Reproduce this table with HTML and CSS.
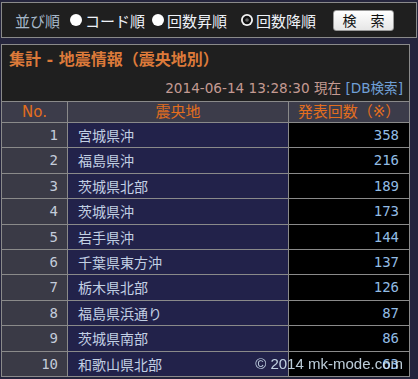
FILE: index.html
```html
<!DOCTYPE html>
<html lang="ja">
<head>
<meta charset="utf-8">
<title>集計 - 地震情報（震央地別）</title>
<link rel="stylesheet" href="styles.css">
</head>
<body>
<form class="sortbar">
  <span class="sort-label">並び順</span>
  <label class="opt opt-code"><svg class="radio" viewBox="0 0 12 12" width="12" height="12"><circle cx="6" cy="6" r="6" fill="#fff"/></svg>コード順</label>
  <label class="opt opt-asc"><svg class="radio" viewBox="0 0 12 12" width="12" height="12"><circle cx="6" cy="6" r="6" fill="#fff"/></svg>回数昇順</label>
  <label class="opt opt-desc"><svg class="radio" viewBox="0 0 12 12" width="12" height="12"><circle cx="6" cy="6" r="6" fill="#f4f4f4"/><circle cx="6" cy="6" r="4.2" fill="#111"/><circle cx="6" cy="6" r="1.8" fill="#666"/></svg>回数降順</label>
  <button type="button" class="search-btn">検　索</button>
</form>

<section class="panel">
  <h1 class="title">集計 - 地震情報（震央地別）</h1>
  <p class="stamp">2014-06-14 13:28:30 現在 <span class="db">[DB検索]</span></p>
  <table class="stats">
    <colgroup><col class="c-no"><col class="c-area"><col class="c-count"></colgroup>
    <thead>
      <tr><th>No.</th><th>震央地</th><th>発表回数（※）</th></tr>
    </thead>
    <tbody>
      <tr><td class="no">1</td><td class="area">宮城県沖</td><td class="count">358</td></tr>
      <tr><td class="no">2</td><td class="area">福島県沖</td><td class="count">216</td></tr>
      <tr><td class="no">3</td><td class="area">茨城県北部</td><td class="count">189</td></tr>
      <tr><td class="no">4</td><td class="area">茨城県沖</td><td class="count">173</td></tr>
      <tr><td class="no">5</td><td class="area">岩手県沖</td><td class="count">144</td></tr>
      <tr><td class="no">6</td><td class="area">千葉県東方沖</td><td class="count">137</td></tr>
      <tr><td class="no">7</td><td class="area">栃木県北部</td><td class="count">126</td></tr>
      <tr><td class="no">8</td><td class="area">福島県浜通り</td><td class="count">87</td></tr>
      <tr><td class="no">9</td><td class="area">茨城県南部</td><td class="count">86</td></tr>
      <tr><td class="no">10</td><td class="area">和歌山県北部</td><td class="count">63</td></tr>
    </tbody>
  </table>
</section>

<footer class="copyright">© 2014 mk-mode.com</footer>
</body>
</html>
```
FILE: styles.css
```css
html, body {
  margin: 0;
  padding: 0;
}
body {
  background: #25253d;
  padding: 2px 1px 0 1px;
  font-family: "DejaVu Sans", "Noto Sans CJK JP", sans-serif;
  font-size: 14px;
  color: #d0d8e4;
  overflow: hidden;
}

/* ---- sort bar ---- */
.sortbar {
  box-sizing: border-box;
  width: 416px;
  height: 36px;
  margin: 0;
  border: 1px solid #8a8a8a;
  background: #1f1f1f;
  display: flex;
  align-items: center;
  padding: 0 0 0 13px;
  font-family: "Noto Sans CJK JP", sans-serif;
  font-size: 15px;
}
.sort-label {
  color: #a6b8ca;
  margin-right: 10px;
}
.opt {
  display: flex;
  align-items: center;
  color: #eef2f8;
}
.radio {
  margin-right: 3px;
  flex: none;
}
.opt-code { width: 82px; }
.opt-asc { width: 89px; }
.opt-desc { width: 92px; }
.search-btn {
  box-sizing: border-box;
  width: 61px;
  height: 21px;
  padding: 0;
  border: 1px solid #9a9a9a;
  border-radius: 3px;
  background: linear-gradient(#ffffff, #e6e6e6);
  font-family: "Noto Sans CJK JP", sans-serif;
  font-size: 14px;
  line-height: 19px;
  color: #111;
}

/* ---- panel ---- */
.panel {
  box-sizing: border-box;
  width: 409px;
  margin-top: 6px;
  border: 1px solid #8a8a8a;
  border-bottom: none;
  background: #1f1f1f;
}
.title {
  margin: 0;
  padding: 5px 7px 0;
  font-size: 16px;
  line-height: 20px;
  font-weight: bold;
  color: #dc7a3a;
}
.stamp {
  margin: 9px 0 0;
  padding: 0 6px 4px 0;
  text-align: right;
  font-size: 13.6px;
  line-height: 18px;
  color: #c49a92;
}
.db {
  color: #6f9fd6;
}

/* ---- table ---- */
.stats {
  width: 100%;
  table-layout: fixed;
  border-collapse: separate;
  border-spacing: 0;
  border-top: 1px solid #8a8a8a;
}
.c-no { width: 66px; }
.c-area { width: 221px; }
.stats th,
.stats td {
  box-sizing: border-box;
  border-right: 1px solid #8a8a8a;
  border-bottom: 1px solid #8a8a8a;
  padding: 0;
}
.stats th:last-child,
.stats td:last-child {
  border-right: none;
}
.stats th {
  background: #3c3c4a;
  color: #e36e1e;
  font-weight: normal;
  font-size: 15px;
  line-height: 20px;
  text-align: center;
}
.stats td {
  line-height: 18.4px;
  padding-top: 3px;
  padding-bottom: 3px;
  white-space: nowrap;
}
.no {
  background: #3a3a46;
  text-align: right;
  padding-right: 9px !important;
  font-family: "DejaVu Sans Mono", monospace;
  color: #c4ccda;
}
.area {
  background: #22224a;
  padding-left: 10px !important;
  font-family: "Noto Sans CJK JP", sans-serif;
  color: #c2d0e4;
}
.count {
  background: #000;
  text-align: right;
  padding-right: 10px !important;
  font-family: "DejaVu Sans Mono", monospace;
  color: #92bce4;
}

/* ---- copyright ---- */
.copyright {
  position: fixed;
  right: 15px;
  bottom: 7px;
  font-family: "Liberation Sans", Arial, sans-serif;
  font-size: 15px;
  line-height: 17px;
  color: rgba(214, 232, 246, 0.88);
}
```
